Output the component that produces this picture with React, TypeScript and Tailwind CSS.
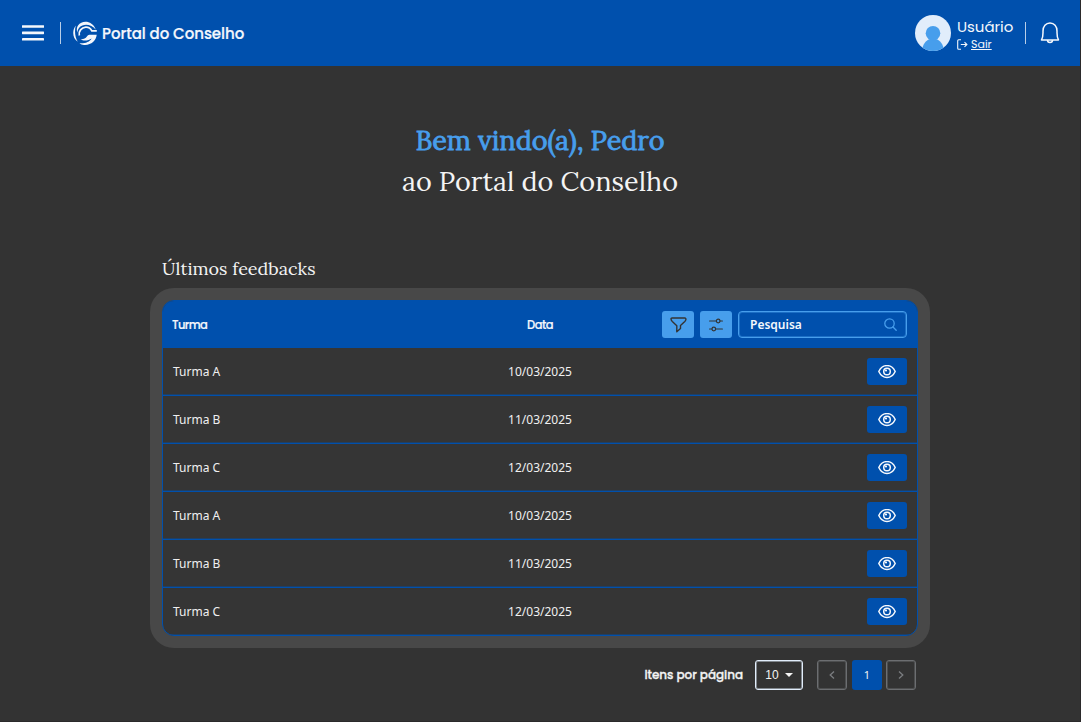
import React from "react";

const rows = [
  { turma: "Turma A", data: "10/03/2025" },
  { turma: "Turma B", data: "11/03/2025" },
  { turma: "Turma C", data: "12/03/2025" },
  { turma: "Turma A", data: "10/03/2025" },
  { turma: "Turma B", data: "11/03/2025" },
  { turma: "Turma C", data: "12/03/2025" },
];

const MenuIcon = () => (
  <svg width="22" height="18" viewBox="0 0 22 18" fill="#f4f7fc" className="block">
    <rect y="1.200" width="22" height="2.600" rx=".4" />
    <rect y="7.600" width="22" height="2.600" rx=".4" />
    <rect y="14" width="22" height="2.600" rx=".4" />
  </svg>
);

const Logo = () => (
  <svg width="24" height="24" viewBox="0 0 24 24" fill="none" className="block">
    <path d="M5.200 4.200C9-1 19.500-.8 22.800 8.700C18.500 3 10.500 2 6.400 6.400C5 8 4.500 9.500 4.300 11.500C3.500 9 3.700 6.200 5.200 4.200Z" fill="#f4f7fc" />
    <path d="M2.800 4.500C-.9 9-.9 17 4.800 20.800C2 16.500 1.300 9.500 2.800 4.500Z" fill="#f4f7fc" />
    <path d="M6.300 14.500C5.300 10.300 8.500 6.500 12.700 6.200C15.700 6 17.500 7.500 18.800 9.900H23.800" stroke="#f4f7fc" strokeWidth="1.700" />
    <path d="M23.700 13.800C23.200 19.800 17.700 24.500 11 23.900C9.300 23.700 7.800 23.200 6.500 22.200C11.500 22.700 16.700 21.200 18.600 17.500C15.500 19.700 10.500 20.300 7.500 18.300C10.300 18.600 12.400 17.700 13.900 15.600C15 14 16 13.800 17.500 13.800Z" fill="#f4f7fc" />
  </svg>
);

const Avatar = () => (
  <svg width="36" height="36" viewBox="0 0 36 36" className="block">
    <defs>
      <clipPath id="avatar">
        <circle cx="18" cy="18" r="18" />
      </clipPath>
    </defs>
    <g clipPath="url(#avatar)">
      <rect width="36" height="36" fill="#e1edfb" />
      <path d="M7 36C7.500 29.500 11 25 15 24H21C25 25 28.500 29.500 29 36Z" fill="#479eec" />
      <circle cx="18" cy="18.200" r="7.300" fill="#479eec" />
    </g>
  </svg>
);

const Bell = () => (
  <svg width="20" height="24" viewBox="0 0 20 24" fill="none" stroke="#f4f7fc" strokeWidth="1.500" strokeLinejoin="round" className="block">
    <path d="M1.500 18.900C2.800 16.800 3 14.500 3 11.700V10C3 5.500 5.800 2 10 2S17 5.500 17 10V11.700C17 14.500 17.200 16.800 18.500 18.900Z" />
    <path d="M7.500 19C7.500 22.300 12.500 22.300 12.500 19" />
  </svg>
);

const Eye = () => (
  <svg width="18" height="14" viewBox="0 0 18 14" fill="none" stroke="#f4f7fc" className="block">
    <path d="M.8 6.500C4.500-1.400 13.500-1.400 17.200 6.500C13.500 14.400 4.500 14.400 .8 6.500Z" strokeWidth="1.500" />
    <circle cx="9" cy="6.500" r="3.300" strokeWidth="1.500" />
    <circle cx="8" cy="5.500" r="1.100" fill="#f4f7fc" stroke="none" />
  </svg>
);

const Funnel = () => (
  <svg width="17" height="16" viewBox="0 0 17 16" fill="none" stroke="#333" strokeWidth="1.400" strokeLinejoin="round" className="block">
    <path d="M2 1H14.800Q16 1 15.900 2.600Q15.700 3.500 14.800 4.400L10.500 8.500V11.500L6.800 14.800V8.700L2.300 4.400Q1.100 3.200 1 2Q1 1 2 1Z" />
  </svg>
);

const Sliders = () => (
  <svg width="14" height="14" viewBox="0 0 14 14" fill="none" stroke="#333" strokeWidth="1.200" strokeLinecap="round" className="block">
    <path d="M.6 3H7.200M11.200 3H13.400M.6 11H2.800M6.800 11H13.400" />
    <circle cx="9.200" cy="3" r="1.800" />
    <circle cx="4.800" cy="11" r="1.800" />
  </svg>
);

const Search = () => (
  <svg width="13" height="13" viewBox="0 0 13 13" fill="none" stroke="#479eec" strokeWidth="1.300" strokeLinecap="round" className="block">
    <circle cx="5.500" cy="5.500" r="4.700" />
    <path d="M9 9L12.200 12.200" />
  </svg>
);

const Exit = () => (
  <svg width="11" height="11" viewBox="0 0 11 11" fill="none" stroke="#f4f7fc" strokeWidth="1.100" className="block">
    <path d="M4 .7H1.700Q.7 .7 .7 1.700V9.300Q.7 10.300 1.700 10.300H4M3.800 5.500H9.800M7.500 3.200L9.900 5.500L7.500 7.800" />
  </svg>
);

function Header() {
  return (
    <header className="flex h-[66px] items-center justify-between bg-[#0050ad] pl-[22px] pr-5 font-['Poppins','Inter',sans-serif] text-[#f4f7fc]">
      <div className="flex items-center">
        <button aria-label="Menu">
          <MenuIcon />
        </button>
        <div className="ml-4 h-[22px] w-px bg-[#b8cee8]" />
        <div className="ml-3">
          <Logo />
        </div>
        <span className="ml-[5px] whitespace-nowrap pt-px text-[15px] font-medium leading-6 tracking-[-0.04px] [-webkit-text-stroke:0.2px_#f4f7fc]">Portal do Conselho</span>
      </div>
      <div className="flex items-center">
        <Avatar />
        <div className="ml-1.5 flex w-[56px] flex-col pt-0.5">
          <span className="whitespace-nowrap text-[15px] leading-5 tracking-[-0.05px]">Usuário</span>
          <a className="flex items-center gap-[3px] text-[11px] leading-[15px]">
            <Exit />
            <span className="underline underline-offset-1">Sair</span>
          </a>
        </div>
        <div className="ml-3 h-[22px] w-px bg-[#b8cee8]" />
        <div className="ml-[14px]">
          <Bell />
        </div>
      </div>
    </header>
  );
}

function TableHeader() {
  return (
    <div className="grid h-12 grid-cols-[260px_216px_1fr] items-center bg-[#0050ad] pl-[9px] pr-2.5 text-[#f4f7fc]">
      <span className="pt-[3px] font-['Poppins','Inter',sans-serif] text-[11.500px] font-medium tracking-[-0.55px] [-webkit-text-stroke:0.2px_#f4f7fc]">Turma</span>
      <span className="pt-[3px] text-center font-['Poppins','Inter',sans-serif] text-[11.500px] font-medium tracking-[-0.5px] [-webkit-text-stroke:0.2px_#f4f7fc]">Data</span>
      <div className="flex items-center justify-end gap-1.5 pt-px">
        <button className="flex h-[27px] w-8 shrink-0 items-center justify-center rounded-[3px] bg-[#479eec]" aria-label="Filtrar">
          <Funnel />
        </button>
        <button className="flex h-[27px] w-8 shrink-0 items-center justify-center rounded-[3px] bg-[#479eec]" aria-label="Ordenar">
          <Sliders />
        </button>
        <div className="flex h-[27px] w-[169px] shrink-0 items-center justify-between rounded border border-[#479eec] pl-[11px] pr-[9px] shadow-[inset_0_0_0_1px_rgba(71,158,236,0.4)]">
          <span className="text-xs font-semibold">Pesquisa</span>
          <Search />
        </div>
      </div>
    </div>
  );
}

export default function App() {
  return (
    <div className="h-[722px] w-[1081px] overflow-hidden bg-[#2b2a2b] font-['Noto_Sans',sans-serif]">
      <div className="h-[721px] w-[1080px] bg-[#333]">
        <Header />
        <main className="mx-auto w-[780px]">
          <h1 className="flex flex-col pt-[54px] text-center font-['Lora','Liberation_Serif',serif] text-[27px] font-normal leading-[41px] text-[#f4f4f4]">
            <span className="whitespace-nowrap text-[#479eec] [-webkit-text-stroke:0.8px_#479eec]">Bem vindo(a), Pedro</span>
            <span className="whitespace-nowrap">ao Portal do Conselho</span>
          </h1>
          <h2 className="mt-[54px] pl-3 font-['Lora','Liberation_Serif',serif] text-[18px] leading-[26px] text-[#f4f4f4]">Últimos feedbacks</h2>
          <section className="mt-[6px] rounded-3xl bg-[#484848] p-3">
            <div className="h-[336px] overflow-hidden rounded-xl border border-[#0050ad] bg-[#353535]">
              <div className="-mt-px">
                <TableHeader />
                {rows.map((row, i) => (
                  <div key={i} className="grid h-12 grid-cols-[260px_214px_1fr] items-center border-b border-[#0050ad] pl-2.5 pr-2.5 text-xs text-[#f0f0f0] shadow-[inset_0_-1px_0_rgba(0,80,173,0.4)]">
                    <span>{row.turma}</span>
                    <span className="text-center">{row.data}</span>
                    <button className="flex h-[27px] w-10 items-center justify-center justify-self-end rounded-[3px] bg-[#0050ad]" aria-label="Visualizar">
                      <Eye />
                    </button>
                  </div>
                ))}
              </div>
            </div>
          </section>
          <nav className="mt-3 flex items-center justify-end pr-[14px] text-xs text-[#f4f4f4]">
            <span className="mr-3 whitespace-nowrap font-['Poppins','Inter',sans-serif] font-medium tracking-[-0.05px] [-webkit-text-stroke:0.3px_#f4f4f4]">Itens por página</span>
            <button className="flex h-[30px] w-12 items-center justify-center gap-1.5 rounded-[3px] border border-[#e1edfb] font-['Liberation_Sans',sans-serif] shadow-[inset_0_0_0_1px_rgba(225,237,251,0.45)]">
              10
              <svg width="8" height="4" viewBox="0 0 8 4" className="block">
                <path d="M0 0H8L4 4Z" fill="#f4f4f4" />
              </svg>
            </button>
            <button className="ml-[14px] flex size-[30px] items-center justify-center rounded-[3px] border border-[#6c6e71] shadow-[inset_0_0_0_1px_rgba(108,110,113,0.45)]" aria-label="Anterior">
              <svg width="6" height="8" viewBox="0 0 6 8" fill="none" stroke="#7b7d80" strokeWidth="1.300">
                <path d="M5 .5L1.200 4L5 7.500" />
              </svg>
            </button>
            <button className="ml-[5px] flex size-[30px] items-center justify-center rounded-[3px] bg-[#0050ad] text-[11px]">1</button>
            <button className="ml-1 flex size-[30px] items-center justify-center rounded-[3px] border border-[#6c6e71] shadow-[inset_0_0_0_1px_rgba(108,110,113,0.45)]" aria-label="Próxima">
              <svg width="6" height="8" viewBox="0 0 6 8" fill="none" stroke="#7b7d80" strokeWidth="1.300">
                <path d="M1 .5L4.800 4L1 7.500" />
              </svg>
            </button>
          </nav>
        </main>
      </div>
    </div>
  );
}
